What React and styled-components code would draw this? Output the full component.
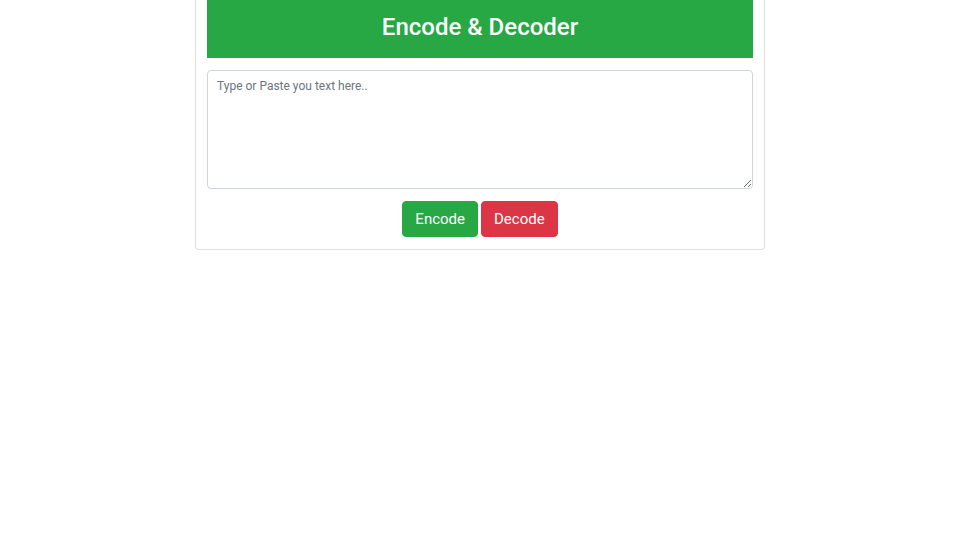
import React from "react";
import styled, { createGlobalStyle } from "styled-components";

const Global = createGlobalStyle`
  html, body { margin: 0; padding: 0; background: #fff; }
  body { font-family: Roboto, "Liberation Sans", sans-serif; color: #212529; }
`;

const Card = styled.div`
  width: 570px;
  margin: 0 auto;
  border: 1px solid rgba(0, 0, 0, 0.125);
  border-top: none;
  border-radius: 0 0 4px 4px;
  padding: 0 11px 12px;
  box-sizing: border-box;
  display: flex;
  flex-direction: column;
  gap: 12px;
`;

const Header = styled.h1`
  margin: 0;
  height: 58px;
  background: #28a745;
  color: #fff;
  font-size: 24px;
  font-weight: 500;
  display: flex;
  align-items: center;
  justify-content: center;
  padding-bottom: 4px;
  box-sizing: border-box;
`;

const TextArea = styled.textarea`
  display: block;
  width: 100%;
  height: 119px;
  box-sizing: border-box;
  border: 1px solid #ced4da;
  border-radius: 4px;
  padding: 6px 9px;
  font-family: Roboto, "Liberation Sans", sans-serif;
  font-size: 12px;
  line-height: 1.5;
  color: #495057;
  resize: vertical;
  &::placeholder { color: #6c757d; }
`;

const Actions = styled.div`
  display: flex;
  justify-content: center;
  gap: 3px;
`;

const Button = styled.button`
  height: 36px;
  padding: 0 12px;
  border: 1px solid ${(p) => p.$bg};
  background: ${(p) => p.$bg};
  color: #fff;
  border-radius: 4px;
  font-family: Roboto, "Liberation Sans", sans-serif;
  font-size: 15px;
  cursor: pointer;
`;

export default function App() {
  return (
    <>
      <Global />
      <Card>
        <Header>Encode &amp; Decoder</Header>
        <TextArea placeholder="Type or Paste you text here.." />
        <Actions>
          <Button $bg="#28a745">Encode</Button>
          <Button $bg="#dc3545">Decode</Button>
        </Actions>
      </Card>
    </>
  );
}
